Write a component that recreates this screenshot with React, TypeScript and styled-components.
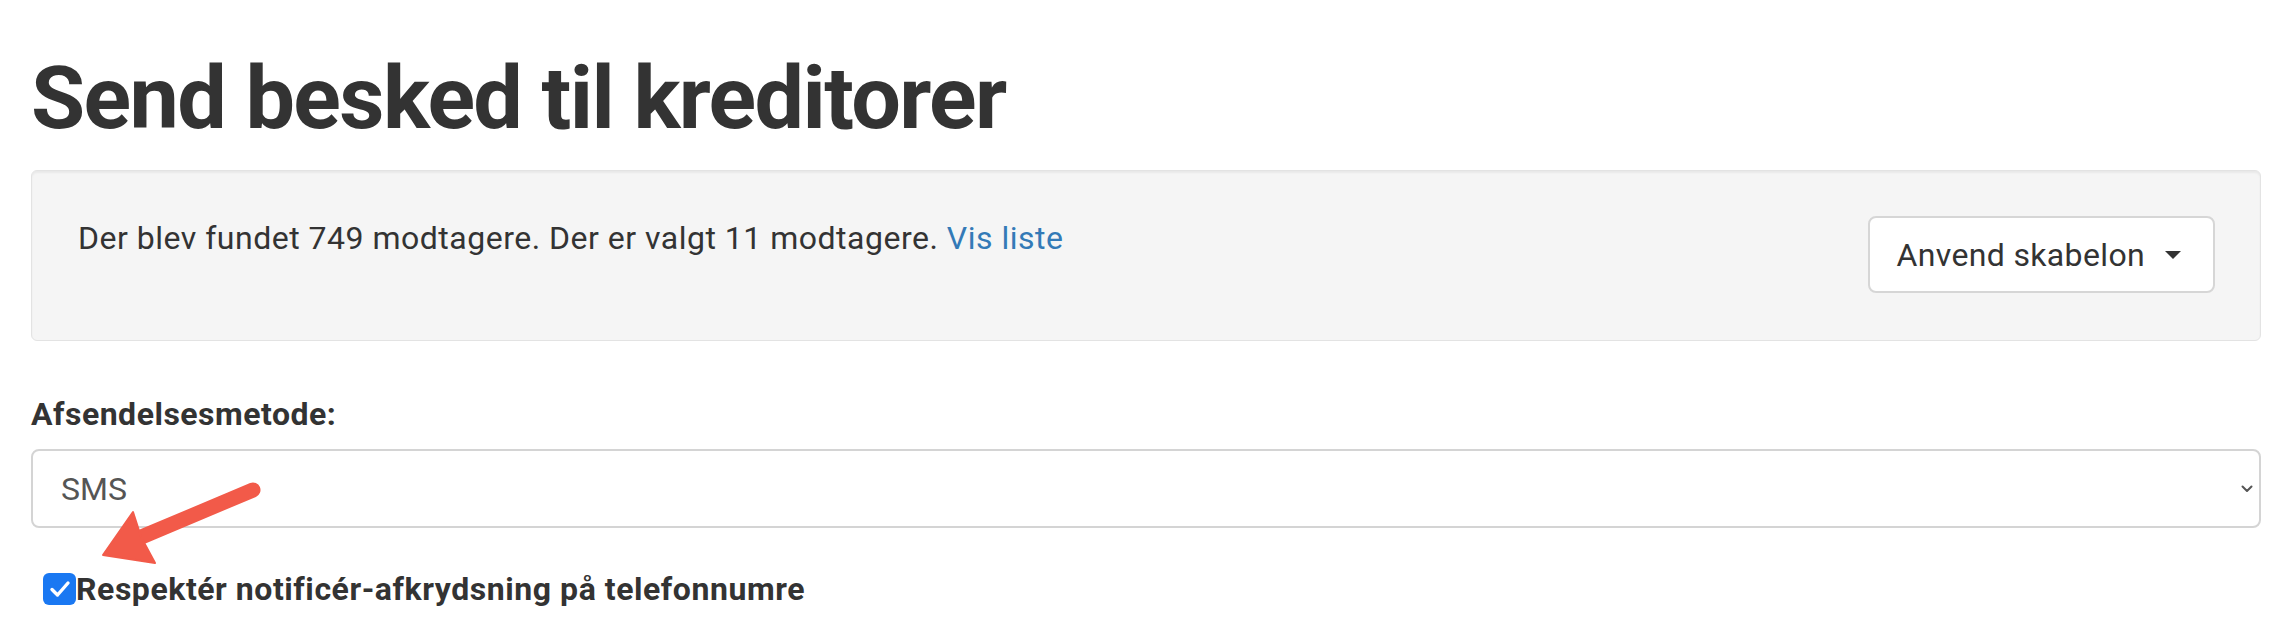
import React from 'react';
import styled, { createGlobalStyle } from 'styled-components';

const GlobalStyle = createGlobalStyle`
  html, body {
    margin: 0;
    padding: 0;
    background: #fff;
  }
  body {
    font-family: Roboto, "Liberation Sans", Arial, sans-serif;
    color: #333;
  }
`;

const Page = styled.div`
  position: relative;
  padding: 0 31px;
`;

const Title = styled.h1`
  margin: 0;
  padding-top: 48px;
  font-size: 88px;
  line-height: 100px;
  font-weight: 700;
  letter-spacing: -1.6px;
  color: #333;
`;

const Well = styled.div`
  margin-top: 22px;
  display: flex;
  justify-content: space-between;
  align-items: flex-start;
  padding: 45px 45px 47px 46px;
  background: #f5f5f5;
  border: 1px solid #e3e3e3;
  border-radius: 6px;
  box-shadow: inset 0 2px 2px rgba(0, 0, 0, 0.05);
`;

const Info = styled.p`
  margin: 0;
  font-size: 32px;
  line-height: 44px;
  letter-spacing: 0.5px;
`;

const Link = styled.a`
  color: #337ab7;
  text-decoration: none;
`;

const DropButton = styled.button`
  display: flex;
  align-items: center;
  height: 77px;
  padding: 0 32px 0 27px;
  background: #fff;
  border: 2px solid #d6d6d6;
  border-radius: 8px;
  font-family: inherit;
  font-size: 32px;
  letter-spacing: 0.35px;
  color: #333;
`;

const Caret = styled.span`
  margin-left: 20px;
  width: 0;
  height: 0;
  border-top: 8px solid #333;
  border-left: 8px solid transparent;
  border-right: 8px solid transparent;
`;

const Field = styled.div`
  margin-top: 53px;
`;

const Label = styled.label`
  display: block;
  font-size: 32px;
  line-height: 40px;
  font-weight: 700;
  letter-spacing: 0.5px;
`;

const SelectWrap = styled.div`
  position: relative;
  margin-top: 15px;
`;

const Select = styled.select`
  display: block;
  width: 100%;
  height: 79px;
  padding: 0 28px;
  appearance: none;
  background: #fff;
  border: 2px solid #d4d4d4;
  border-radius: 8px;
  font-family: inherit;
  font-size: 32px;
  color: #555;
`;

const Chevron = styled.svg`
  position: absolute;
  right: 8px;
  top: 50%;
  margin-top: -4px;
  pointer-events: none;
`;

const CheckRow = styled.label`
  display: flex;
  align-items: center;
  margin-top: 44px;
  margin-left: 12px;
  font-size: 32px;
  font-weight: 700;
  line-height: 34px;
  letter-spacing: 0.55px;
`;

const Box = styled.span`
  display: flex;
  align-items: center;
  justify-content: center;
  flex: none;
  width: 33px;
  height: 32px;
  background: #1a78f2;
  border-radius: 6px;
`;

const Arrow = styled.svg`
  position: absolute;
  left: 95px;
  top: 480px;
  pointer-events: none;
`;

export default function App() {
  return (
    <>
      <GlobalStyle />
      <Page>
        <Title>Send besked til kreditorer</Title>
        <Well>
          <Info>
            Der blev fundet 749 modtagere. Der er valgt 11 modtagere. <Link href="#">Vis liste</Link>
          </Info>
          <DropButton type="button">
            Anvend skabelon
            <Caret />
          </DropButton>
        </Well>
        <Field>
          <Label htmlFor="method">Afsendelsesmetode:</Label>
          <SelectWrap>
            <Select id="method" defaultValue="sms">
              <option value="sms">SMS</option>
              <option value="email">E-mail</option>
            </Select>
            <Chevron width="12" height="8" viewBox="0 0 12 8">
              <path d="M1.5 1.5 6 6l4.5-4.5" fill="none" stroke="#555" strokeWidth="2" strokeLinecap="round" strokeLinejoin="round" />
            </Chevron>
          </SelectWrap>
        </Field>
        <CheckRow>
          <Box>
            <svg width="22" height="18" viewBox="0 0 22 18">
              <path d="M3 9.5 8.5 15 19 3" fill="none" stroke="#fff" strokeWidth="3.4" strokeLinecap="round" strokeLinejoin="round" />
            </svg>
          </Box>
          Respektér notificér-afkrydsning på telefonnumre
        </CheckRow>
        <Arrow width="175" height="100" viewBox="0 0 175 100">
          <line x1="158" y1="10" x2="44" y2="58" stroke="#f25a49" strokeWidth="15" strokeLinecap="round" />
          <polygon points="8,75 38,32 46,57 60,83" fill="#f25a49" stroke="#f25a49" strokeWidth="2" strokeLinejoin="round" />
        </Arrow>
      </Page>
    </>
  );
}
